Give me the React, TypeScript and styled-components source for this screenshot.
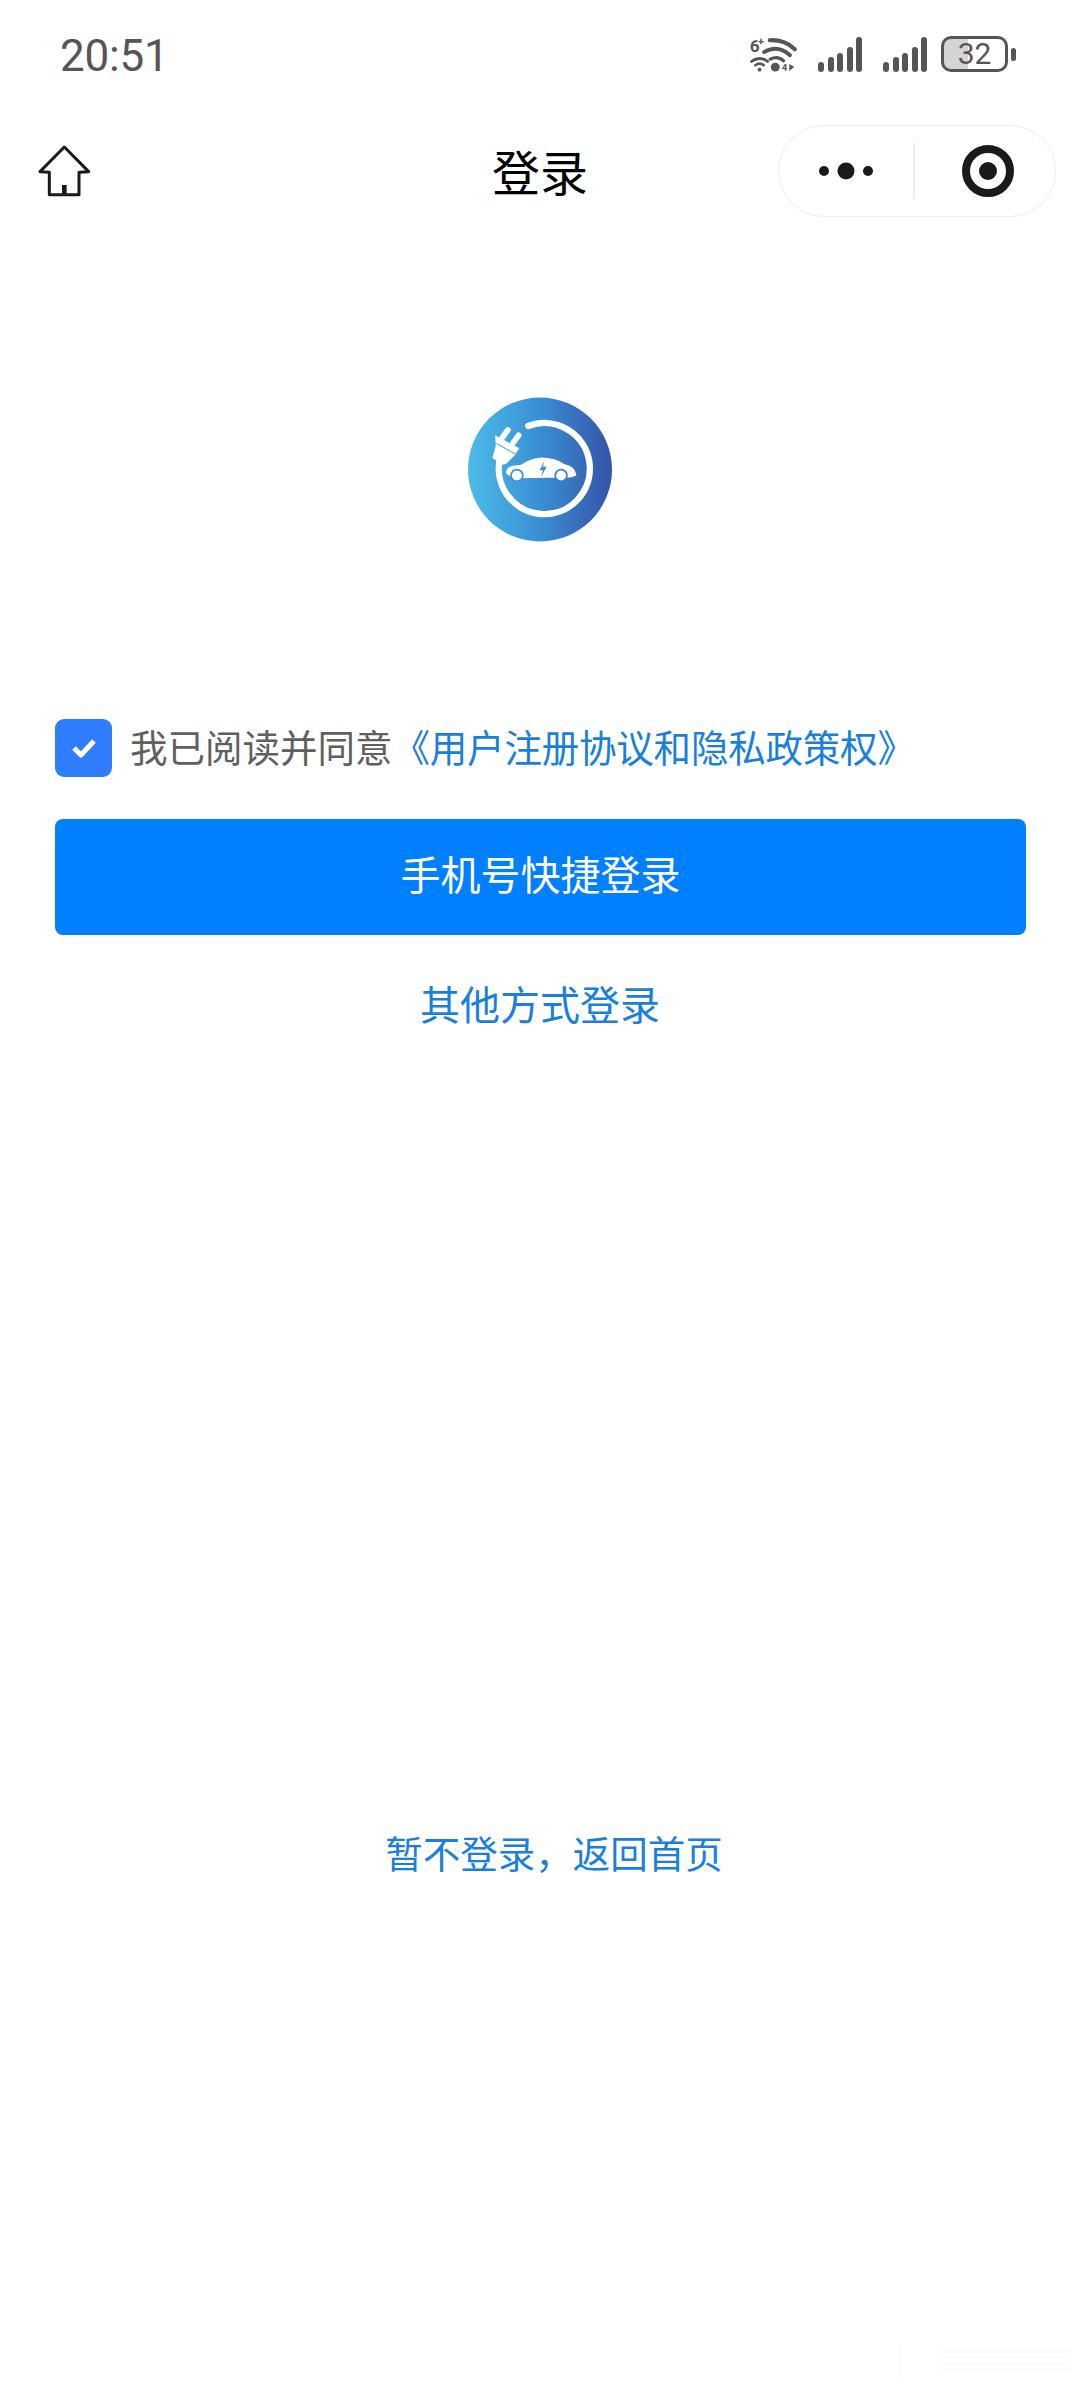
import styled, { createGlobalStyle } from "styled-components";

const GlobalStyle = createGlobalStyle`
  html, body {
    margin: 0;
    padding: 0;
    background: #fff;
  }
  body {
    font-family: "Noto Sans CJK SC", "Noto Sans", sans-serif;
  }
`;

const Page = styled.div`
  position: relative;
  width: 1080px;
  height: 2387px;
  overflow: hidden;
  background: #fff;
  display: flex;
  flex-direction: column;
`;

const StatusBar = styled.div`
  height: 111px;
  box-sizing: border-box;
  padding: 0 64px 0 60px;
  display: flex;
  align-items: center;
  justify-content: space-between;
`;

const Time = styled.div`
  font-family: Roboto, sans-serif;
  font-size: 44px;
  line-height: 1;
  letter-spacing: -0.2px;
  color: #555;
`;

const StatusIcons = styled.div`
  display: flex;
  align-items: center;
  height: 36px;
  margin-top: -3px;
`;

const Signal = styled.div`
  display: flex;
  align-items: flex-end;
  gap: 3.5px;
  height: 35px;
  margin-left: 21px;
`;

const SignalBar = styled.span<{ $h: number }>`
  width: 6px;
  height: ${(p) => p.$h}px;
  border-radius: 3px;
  background: #555;
`;

const Battery = styled.div`
  width: 67px;
  height: 36px;
  box-sizing: border-box;
  margin-left: 14px;
  border: 3.5px solid #555;
  border-radius: 10px;
  background: linear-gradient(to right, #d4d4d4 0 40%, #fff 40%);
  display: flex;
  align-items: center;
  justify-content: center;
  font-family: Roboto, sans-serif;
  font-size: 30px;
  line-height: 1;
  color: #555;
`;

const BatteryNub = styled.span`
  width: 5px;
  height: 13px;
  margin-left: 3px;
  border-radius: 3px;
  background: #555;
`;

const NavBar = styled.div`
  height: 92px;
  margin-top: 14px;
  box-sizing: border-box;
  padding: 0 24px;
  display: grid;
  grid-template-columns: 1fr auto 1fr;
  align-items: center;
`;

const HomeSlot = styled.div`
  padding-left: 13px;
  display: flex;
  align-items: center;
`;

const Title = styled.div`
  font-size: 48px;
  line-height: 1;
  color: #000;
  margin-top: -3px;
`;

const Capsule = styled.div`
  justify-self: end;
  width: 278px;
  height: 92px;
  box-sizing: border-box;
  border: 1.5px solid #ececec;
  border-radius: 46px;
  display: flex;
  align-items: center;
`;

const CapsulePart = styled.div<{ $shift?: number }>`
  flex: 1 1 0;
  box-sizing: border-box;
  padding-left: ${(p) => p.$shift ?? 0}px;
  display: flex;
  align-items: center;
  justify-content: center;
`;

const CapsuleDivider = styled.div`
  width: 1.5px;
  height: 56px;
  background: #ececec;
`;

const LogoWrap = styled.div`
  margin-top: 180px;
  display: flex;
  justify-content: center;
`;

const Agreement = styled.div`
  margin-top: 177px;
  padding-left: 55px;
  display: flex;
  align-items: center;
  font-size: 37.5px;
  line-height: 58px;
  white-space: nowrap;
`;

const CheckBox = styled.div`
  width: 57px;
  height: 58px;
  margin-right: 18px;
  border-radius: 9px;
  background: #2f7cff;
  display: flex;
  align-items: center;
  justify-content: center;
`;

const AgreeText = styled.span`
  color: #5f5f5f;
  margin-top: -5px;
`;

const LinkText = styled.span`
  color: #1a7fdc;
  letter-spacing: -0.2px;
  margin: -5px 0 0 0;
`;

const LoginButton = styled.div`
  margin: 42px 54px 0 55px;
  height: 116px;
  box-sizing: border-box;
  padding-bottom: 8px;
  border-radius: 8px;
  background: #0080ff;
  color: #fff;
  font-size: 40px;
  display: flex;
  align-items: center;
  justify-content: center;
`;

const OtherLogin = styled.div`
  margin-top: 38px;
  text-align: center;
  font-size: 40px;
  line-height: 60px;
  color: #1a7fdc;
`;

const SkipLogin = styled.div`
  margin-top: 789px;
  padding-left: 28px;
  text-align: center;
  font-size: 37.5px;
  line-height: 60px;
  color: #1a7fdc;
`;

const Watermark = styled.svg`
  position: absolute;
  right: 8px;
  bottom: 8px;
`;

const WifiIcon = () => (
  <svg width="48" height="36" viewBox="150 105 150 112">
    <text x="152" y="155" fontFamily="Roboto, sans-serif" fontWeight="700" fontSize="54" fill="#555">6</text>
    <text x="178" y="133" fontFamily="Roboto, sans-serif" fontWeight="700" fontSize="34" fill="#555">+</text>
    <g fill="none" stroke="#555" strokeLinecap="round">
      <path d="M215 118 Q262 116 293 146" strokeWidth="13" />
      <path d="M197 155 Q240 130 278 165" strokeWidth="12" />
      <path d="M216 177 Q240 165 258 182" strokeWidth="10" />
      <path d="M158 184 Q183 166 208 184" strokeWidth="9" />
      <path d="M170 196 Q183 186 196 196" strokeWidth="8" />
    </g>
    <circle cx="183" cy="210" r="6" fill="#555" />
    <circle cx="232" cy="202" r="14" fill="#555" />
    <text x="252" y="215" fontFamily="Roboto, sans-serif" fontWeight="700" fontSize="30" fill="#555">4</text>
    <path d="M276 192 L291 202 L276 214 Z" fill="#555" />
  </svg>
);

const HomeIcon = () => (
  <svg width="55" height="54" viewBox="105 432 165 162">
    <path
      d="M187 441 L114 515 L142 517 L142 584 L231 584 L231 517 L260 515 Z"
      fill="none"
      stroke="#1a1a1a"
      strokeWidth="9"
      strokeLinejoin="round"
    />
    <rect x="180" y="555" width="14" height="29" fill="#1a1a1a" />
  </svg>
);

const MoreIcon = () => (
  <svg width="56" height="20" viewBox="0 0 56 20">
    <circle cx="6" cy="10" r="5" fill="#1a1a1a" />
    <circle cx="28" cy="10" r="8.5" fill="#1a1a1a" />
    <circle cx="50" cy="10" r="5" fill="#1a1a1a" />
  </svg>
);

const TargetIcon = () => (
  <svg width="54" height="54" viewBox="0 0 54 54">
    <circle cx="27" cy="27" r="22" fill="none" stroke="#1a1a1a" strokeWidth="8" />
    <circle cx="27" cy="27" r="9" fill="#1a1a1a" />
  </svg>
);

const Logo = () => (
  <svg width="144" height="145" viewBox="85 52 430 432">
    <defs>
      <linearGradient id="logoFill" x1="0" y1="0" x2="1" y2="0">
        <stop offset="0" stopColor="#4cbbe8" />
        <stop offset="0.5" stopColor="#3a8fd4" />
        <stop offset="1" stopColor="#3553a8" />
      </linearGradient>
    </defs>
    <circle cx="300" cy="268" r="215" fill="url(#logoFill)" />
    <path
      d="M265 138 A136 136 0 1 1 183 225"
      fill="none"
      stroke="#fff"
      strokeWidth="19"
      strokeLinecap="round"
    />
    <path d="M166 166 L238 204 L226 224 L200 250 L188 254 L158 234 L168 196 Z" fill="#fff" />
    <path d="M170 190 L226 222" stroke="#3fa3dc" strokeWidth="3" />
    <path d="M188 172 L204 150 M220 188 L236 166" stroke="#fff" strokeWidth="17" strokeLinecap="round" />
    <path
      d="M199 280 Q198 262 218 257 L244 254 Q270 234 305 232 Q345 232 374 252 Q406 258 409 286 L392 292 L218 294 Z"
      fill="#fff"
    />
    <circle cx="231" cy="286" r="20" fill="#3a8fd4" />
    <circle cx="231" cy="286" r="15" fill="#fff" />
    <circle cx="363" cy="286" r="20" fill="#3a80ca" />
    <circle cx="363" cy="286" r="15" fill="#fff" />
    <path d="M313 243 L299 270 L309 270 L302 292 L320 260 L309 260 Z" fill="#3a8ad0" />
  </svg>
);

const CheckIcon = () => (
  <svg width="26" height="22" viewBox="0 0 26 22">
    <path d="M3 11 L10 18 L23 4" fill="none" stroke="#fff" strokeWidth="5" strokeLinejoin="round" />
  </svg>
);

const signalHeights = [10, 15, 19, 25, 35];

export default function App() {
  return (
    <Page>
      <GlobalStyle />
      <StatusBar>
        <Time>20:51</Time>
        <StatusIcons>
          <WifiIcon />
          <Signal>
            {signalHeights.map((h) => (
              <SignalBar key={h} $h={h} />
            ))}
          </Signal>
          <Signal>
            {signalHeights.map((h) => (
              <SignalBar key={h} $h={h} />
            ))}
          </Signal>
          <Battery>32</Battery>
          <BatteryNub />
        </StatusIcons>
      </StatusBar>
      <NavBar>
        <HomeSlot>
          <HomeIcon />
        </HomeSlot>
        <Title>登录</Title>
        <Capsule>
          <CapsulePart>
            <MoreIcon />
          </CapsulePart>
          <CapsuleDivider />
          <CapsulePart $shift={6}>
            <TargetIcon />
          </CapsulePart>
        </Capsule>
      </NavBar>
      <LogoWrap>
        <Logo />
      </LogoWrap>
      <Agreement>
        <CheckBox>
          <CheckIcon />
        </CheckBox>
        <AgreeText>我已阅读并同意</AgreeText>
        <LinkText>《用户注册协议和隐私政策权》</LinkText>
      </Agreement>
      <LoginButton>手机号快捷登录</LoginButton>
      <OtherLogin>其他方式登录</OtherLogin>
      <SkipLogin>暂不登录，返回首页</SkipLogin>
      <Watermark width="190" height="36" viewBox="0 0 190 36">
        <path d="M18 0 V36 M60 8 H188 M60 14 H188 M60 20 H188 M60 27 H188" stroke="#fafafa" strokeWidth="3" fill="none" />
      </Watermark>
    </Page>
  );
}
